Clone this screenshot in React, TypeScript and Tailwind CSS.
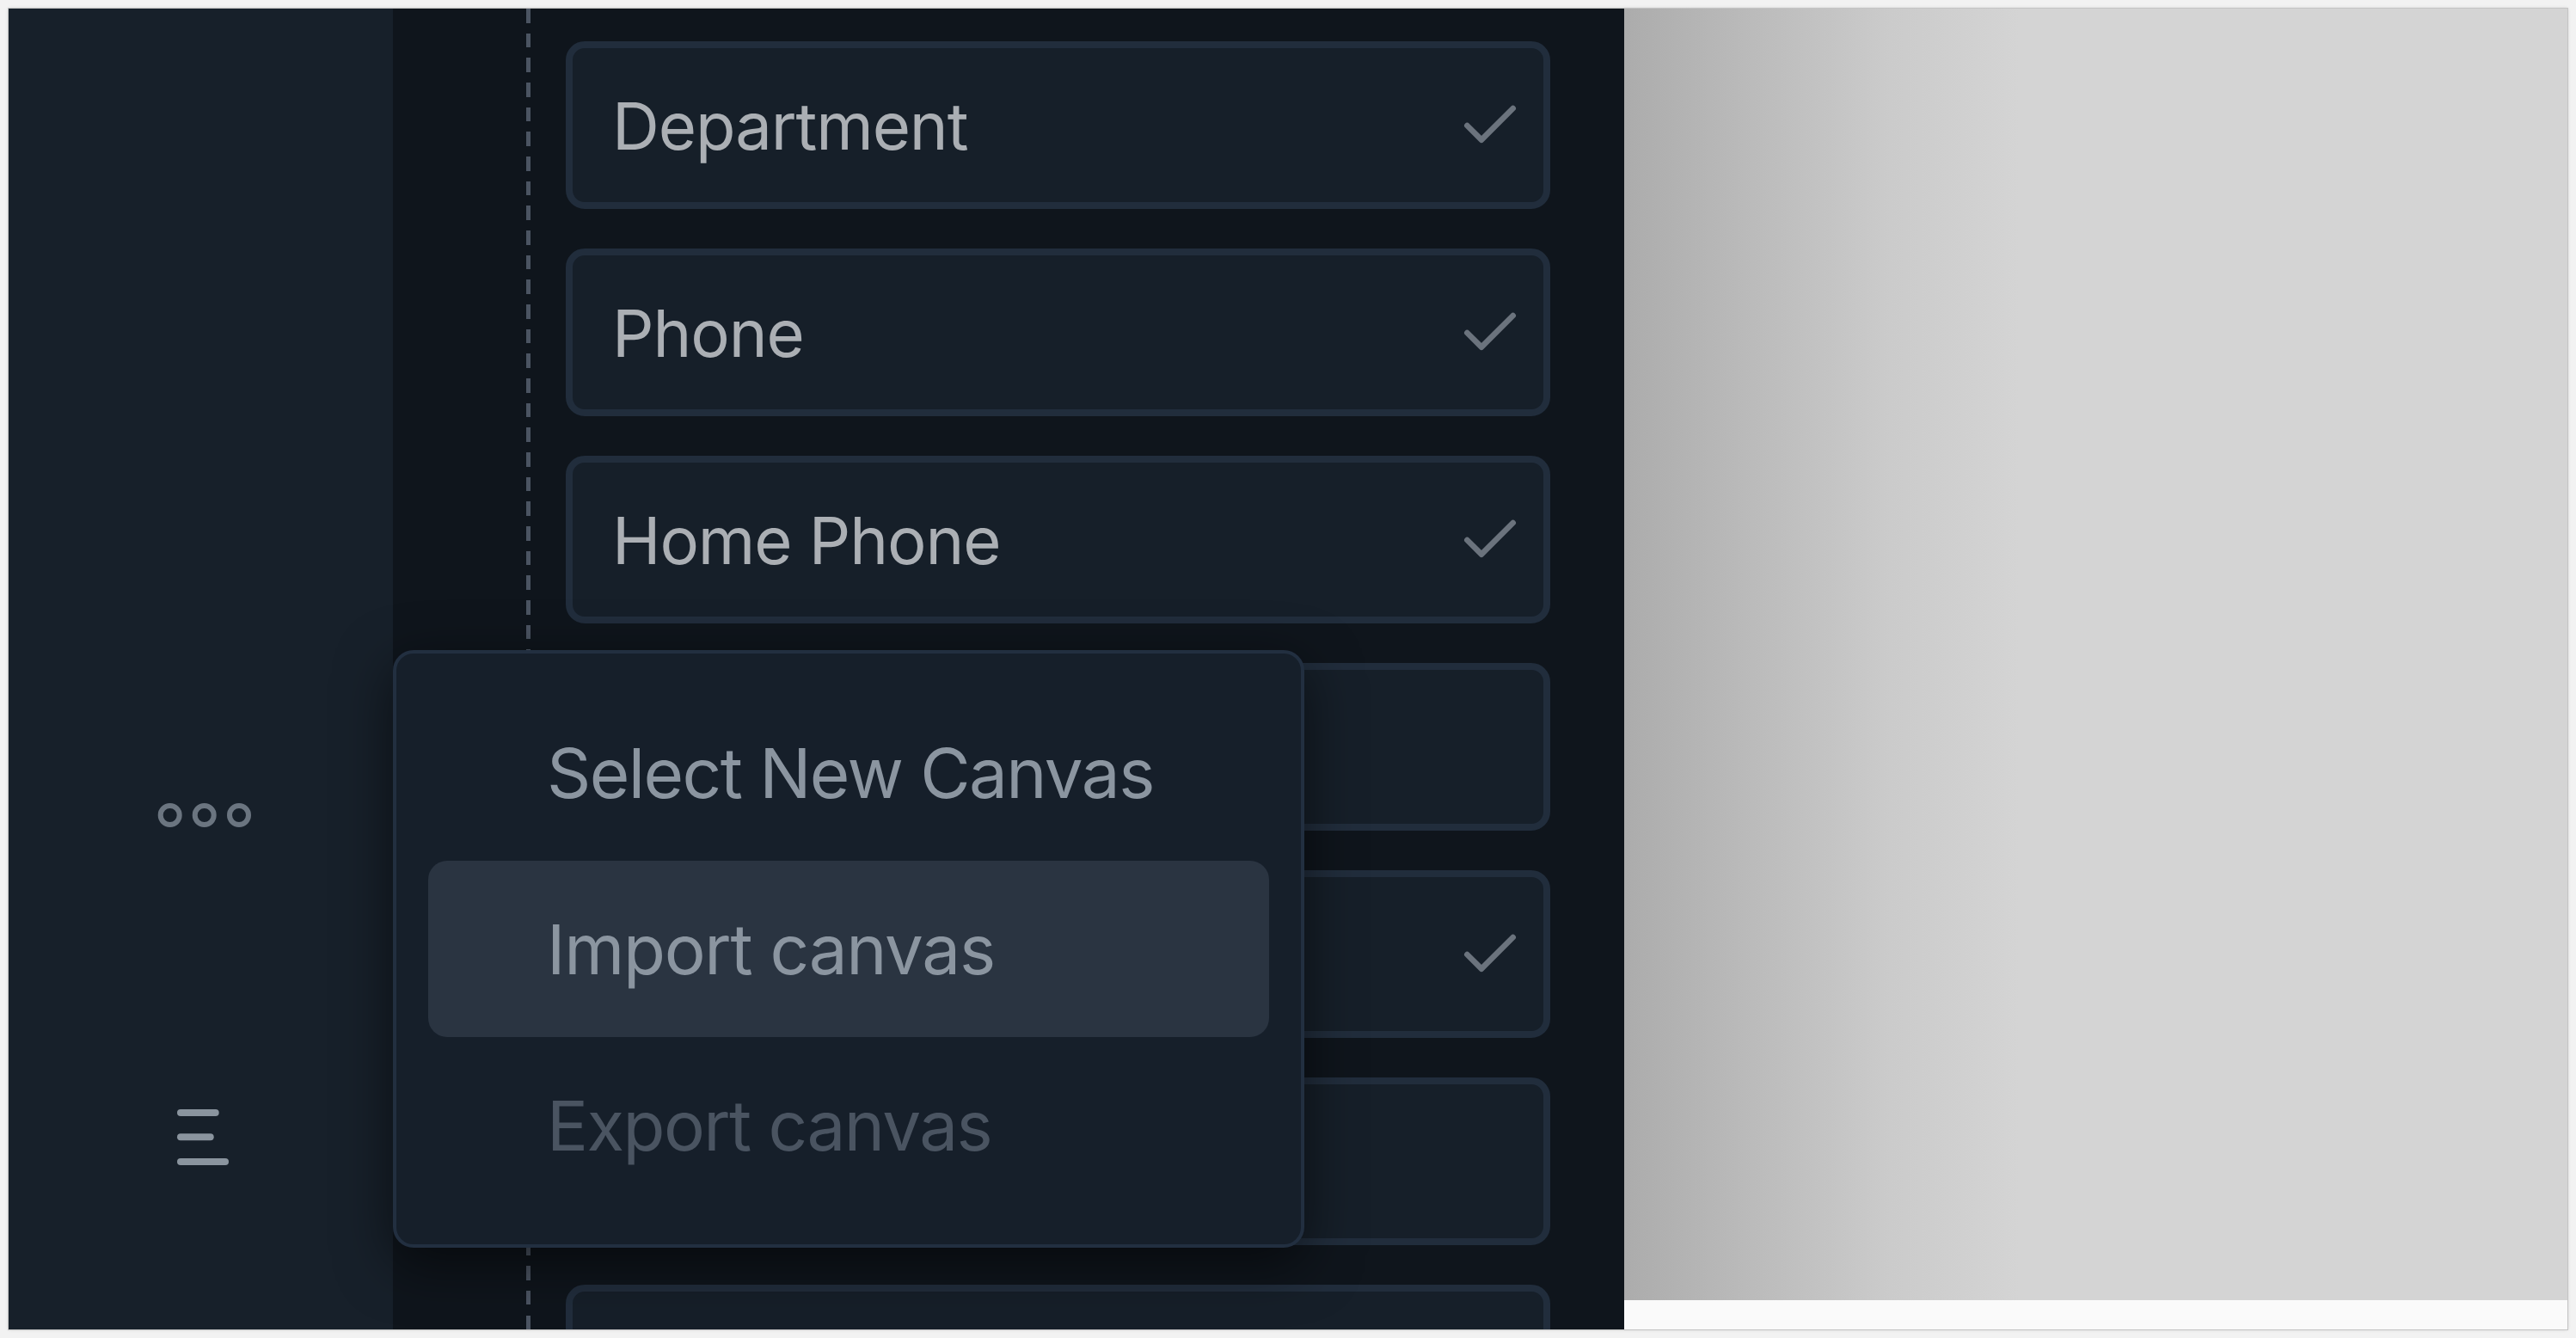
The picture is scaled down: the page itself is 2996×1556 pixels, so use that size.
import React from "react";
import { Check } from "lucide-react";

const cards = [
  { label: "Department", checked: true },
  { label: "Phone", checked: true },
  { label: "Home Phone", checked: true },
  { label: "", checked: false },
  { label: "", checked: true },
  { label: "", checked: false },
  { label: "", checked: false },
];

function DotsIcon() {
  return (
    <svg width="116" height="32" viewBox="0 0 116 32" fill="none">
      <circle cx="17.7" cy="16" r="11" stroke="#6b7580" strokeWidth="6" />
      <circle cx="57.7" cy="16" r="11" stroke="#6b7580" strokeWidth="6" />
      <circle cx="98" cy="16" r="11" stroke="#6b7580" strokeWidth="6" />
    </svg>
  );
}

function MenuIcon() {
  return (
    <svg width="72" height="72" viewBox="0 0 72 72" fill="none">
      <line x1="10" y1="8" x2="50.7" y2="8" stroke="#8a949e" strokeWidth="8" strokeLinecap="round" />
      <line x1="10" y1="36.3" x2="44.7" y2="36.3" stroke="#8a949e" strokeWidth="8" strokeLinecap="round" />
      <line x1="10" y1="65" x2="62" y2="65" stroke="#8a949e" strokeWidth="8" strokeLinecap="round" />
    </svg>
  );
}

export default function App() {
  return (
    <div
      className="w-[2996px] h-[1556px] bg-[#f2f2f2] p-[10px]"
      style={{ fontFamily: "Inter, 'Noto Sans', sans-serif" }}
    >
      <div className="relative flex h-full w-full overflow-hidden shadow-[0_0_0_1px_#c4c4c4,0_0_4px_rgba(0,0,0,0.18)]">
        {/* Sidebar */}
        <div className="flex w-[447px] shrink-0 flex-col items-start bg-[#17202a] pl-[170px] pt-[922px]">
          <DotsIcon />
          <div className="ml-[20px] mt-[322px]">
            <MenuIcon />
          </div>
        </div>

        {/* Field panel */}
        <div className="flex w-[1432px] shrink-0 overflow-hidden bg-[#0f151c]">
          <div className="ml-[155px] h-full w-[5px] shrink-0 bg-[repeating-linear-gradient(to_bottom,#4b5462_0px,#4b5462_16.5px,transparent_16.5px,transparent_28.67px)]" />
          <div className="ml-[41px] flex w-[1145px] shrink-0 flex-col gap-[46px] pt-[38px]">
            {cards.map((c, i) => (
              <div
                key={i}
                className="flex h-[195px] shrink-0 items-center justify-between rounded-[22px] border-[8px] border-[#212d3c] bg-[#161f29] pl-[46px] pr-[22px]"
              >
                <span className="text-[76px] leading-none tracking-[-1.1px] text-[#abafb4]">{c.label}</span>
                {c.checked ? (
                  <Check size={80} strokeWidth={2} color="#6b737d" />
                ) : null}
              </div>
            ))}
          </div>
        </div>

        {/* Right gray area */}
        <div className="flex flex-1 flex-col">
          <div className="flex-1 bg-[linear-gradient(to_right,#acacac_0px,#bbbbbb_150px,#cbcbcb_310px,#d4d4d4_460px,#d4d4d4_100%)]" />
          <div className="h-[34px] bg-[#fafafa]" />
        </div>

        {/* Dropdown menu */}
        <div className="absolute left-[447px] top-[746px] w-[1060px] rounded-[24px] border-[4px] border-[#222f40] bg-[#161f2a] px-[37px] py-[36px] shadow-[0_18px_64px_rgba(0,0,0,0.55)]">
          <div className="flex h-[205px] items-center pl-[138px] text-[80px] leading-none tracking-[-1.6px] text-[#8b95a0]">
            Select New Canvas
          </div>
          <div className="flex h-[205px] items-center rounded-[22px] bg-[#2a3441] pl-[138px] text-[80px] leading-none tracking-[-1.3px] text-[#8b95a0]">
            Import canvas
          </div>
          <div className="flex h-[205px] items-center pl-[138px] text-[80px] leading-none tracking-[-1.6px] text-[#4a5461]">
            Export canvas
          </div>
        </div>
      </div>
    </div>
  );
}
